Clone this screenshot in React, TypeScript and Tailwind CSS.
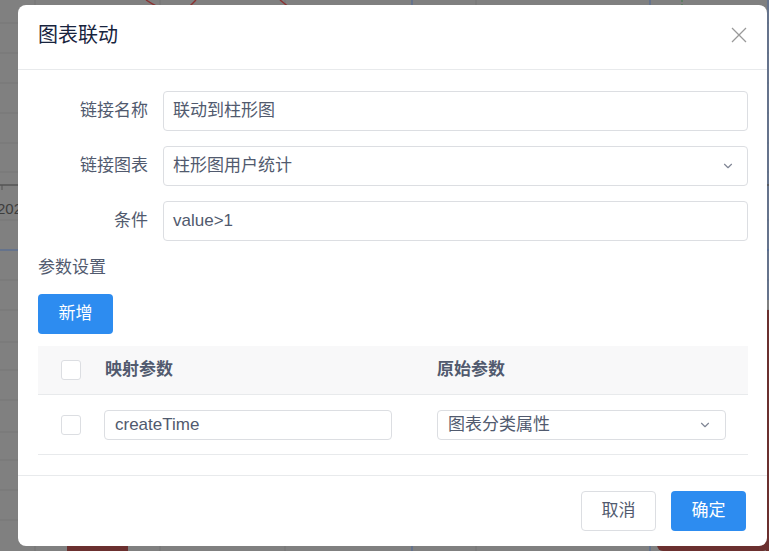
import { ChevronDown } from "lucide-react"

const Backdrop = () => {
  const rows = [23, 53, 83, 113, 143, 172, 220, 280, 310, 342, 370, 400, 432, 460, 490, 520]
  return (
    <svg className="absolute inset-0" width="769" height="551" viewBox="0 0 769 551">
      {rows.map((y) => (
        <line key={y} x1="0" y1={y} x2="769" y2={y} stroke="#767676" strokeWidth="1" />
      ))}
      {[35, 160, 285, 476].map((x) => (
        <line key={x} x1={x} y1="0" x2={x} y2="551" stroke="#747474" strokeWidth="1" />
      ))}
      <line x1="412" y1="0" x2="412" y2="551" stroke="#4b6798" strokeWidth="1" />
      <line x1="650" y1="0" x2="650" y2="551" stroke="#4b6798" strokeWidth="1" />
      <line x1="682" y1="0" x2="682" y2="551" stroke="#3f7a4a" strokeWidth="1" strokeDasharray="2 2" />
      <line x1="768" y1="0" x2="768" y2="300" stroke="#4b6798" strokeWidth="1" />
      <line x1="0" y1="185" x2="769" y2="185" stroke="#555" strokeWidth="1.5" />
      <line x1="2" y1="185" x2="2" y2="190" stroke="#555" strokeWidth="1" />
      <text x="-3" y="214" fontSize="15" fill="#3d3d3d" fontFamily="Liberation Sans, sans-serif">202</text>
      <line x1="0" y1="250" x2="769" y2="250" stroke="#4b6798" strokeWidth="1" />
      <path d="M146 0 Q152 4 158 7" stroke="#8b3333" strokeWidth="1.5" fill="none" />
      <path d="M196 0 Q192 4 188 8" stroke="#8b3333" strokeWidth="1.5" fill="none" />
      <path d="M280 0 Q285 4 290 8" stroke="#8b3333" strokeWidth="1.5" fill="none" />
      <rect x="67" y="540" width="61" height="11" fill="#6b302f" />
      <rect x="657" y="538" width="112" height="13" rx="6" fill="#6b302f" />
      <rect x="766" y="310" width="3" height="241" fill="#6b302f" />
    </svg>
  )
}

const FormRow = ({ label, children }: { label: string; children: React.ReactNode }) => (
  <div className="flex items-center h-[40px]">
    <div className="w-[125px] pr-[15px] text-right text-[17px] leading-[24px] text-[#515a6e]">{label}</div>
    {children}
  </div>
)

const Checkbox = () => (
  <div className="w-[20px] h-[20px] rounded-[3px] border border-[#dcdee2] bg-white" />
)

export default function App() {
  return (
    <div className="relative h-[551px] w-[769px] overflow-hidden bg-[#808080] font-['Liberation_Sans','Noto_Sans_CJK_SC',sans-serif]">
      <Backdrop />
      <div className="relative pl-[18px] pt-[5px]">
        <div className="w-[749px] h-[541px] rounded-[8px] bg-white flex flex-col">
          {/* header */}
          <div className="h-[65px] border-b border-[#e8eaec] flex items-center justify-between pl-[20px] pr-[20px] pb-[4px]">
            <span className="text-[20px] leading-[28px] text-[#17233d]">图表联动</span>
            <svg width="16" height="16" viewBox="0 0 16 16">
              <path d="M1 1 L15 15 M15 1 L1 15" stroke="#999" strokeWidth="1.3" fill="none" />
            </svg>
          </div>

          {/* body */}
          <div className="flex-1 pl-[20px] pr-[19px] pt-[21px]">
            <div className="flex flex-col gap-[15px]">
              <FormRow label="链接名称">
                <div className="flex-1 h-[40px] border border-[#dcdee2] rounded-[4px] pl-[9px] flex items-center text-[17px] text-[#515a6e]">
                  联动到柱形图
                </div>
              </FormRow>
              <FormRow label="链接图表">
                <div className="flex-1 h-[40px] border border-[#dcdee2] rounded-[4px] pl-[9px] pr-[12px] flex items-center justify-between text-[17px] text-[#515a6e]">
                  <span>柱形图用户统计</span>
                  <ChevronDown size={14} strokeWidth={2} className="text-[#808695]" />
                </div>
              </FormRow>
              <FormRow label="条件">
                <div className="flex-1 h-[40px] border border-[#dcdee2] rounded-[4px] pl-[9px] flex items-center text-[17px] text-[#515a6e]">
                  value&gt;1
                </div>
              </FormRow>
            </div>

            <div className="mt-[15px] h-[24px] leading-[24px] text-[17px] text-[#515a6e]">参数设置</div>

            <button className="mt-[14px] w-[75px] h-[40px] rounded-[4px] bg-[#2d8cf0] text-white text-[17px]">
              新增
            </button>

            <div className="mt-[12px]">
              <div className="grid grid-cols-[67px_332px_1fr] h-[49px] items-center bg-[#f8f8f9] border-b border-[#e8eaec] text-[17px] font-bold text-[#515a6e]">
                <div className="pl-[23px]"><Checkbox /></div>
                <div>映射参数</div>
                <div>原始参数</div>
              </div>
              <div className="grid grid-cols-[67px_332px_1fr] h-[60px] items-center border-b border-[#e8eaec] text-[17px] text-[#515a6e]">
                <div className="pl-[23px]"><Checkbox /></div>
                <div className="-ml-[1px]">
                  <div className="w-[288px] h-[30px] border border-[#dcdee2] rounded-[4px] pl-[10px] flex items-center">
                    createTime
                  </div>
                </div>
                <div>
                  <div className="w-[289px] h-[30px] border border-[#dcdee2] rounded-[4px] pl-[10px] pr-[13px] flex items-center justify-between">
                    <span>图表分类属性</span>
                    <ChevronDown size={14} strokeWidth={2} className="text-[#808695]" />
                  </div>
                </div>
              </div>
            </div>
          </div>

          {/* footer */}
          <div className="border-t border-[#e8eaec] pt-[15px] pb-[15px] pr-[21px] flex justify-end gap-[15px]">
            <button className="w-[75px] h-[40px] rounded-[4px] border border-[#dcdee2] bg-white text-[17px] text-[#515a6e]">
              取消
            </button>
            <button className="w-[75px] h-[40px] rounded-[4px] bg-[#2d8cf0] text-[17px] text-white">
              确定
            </button>
          </div>
        </div>
      </div>
    </div>
  )
}
